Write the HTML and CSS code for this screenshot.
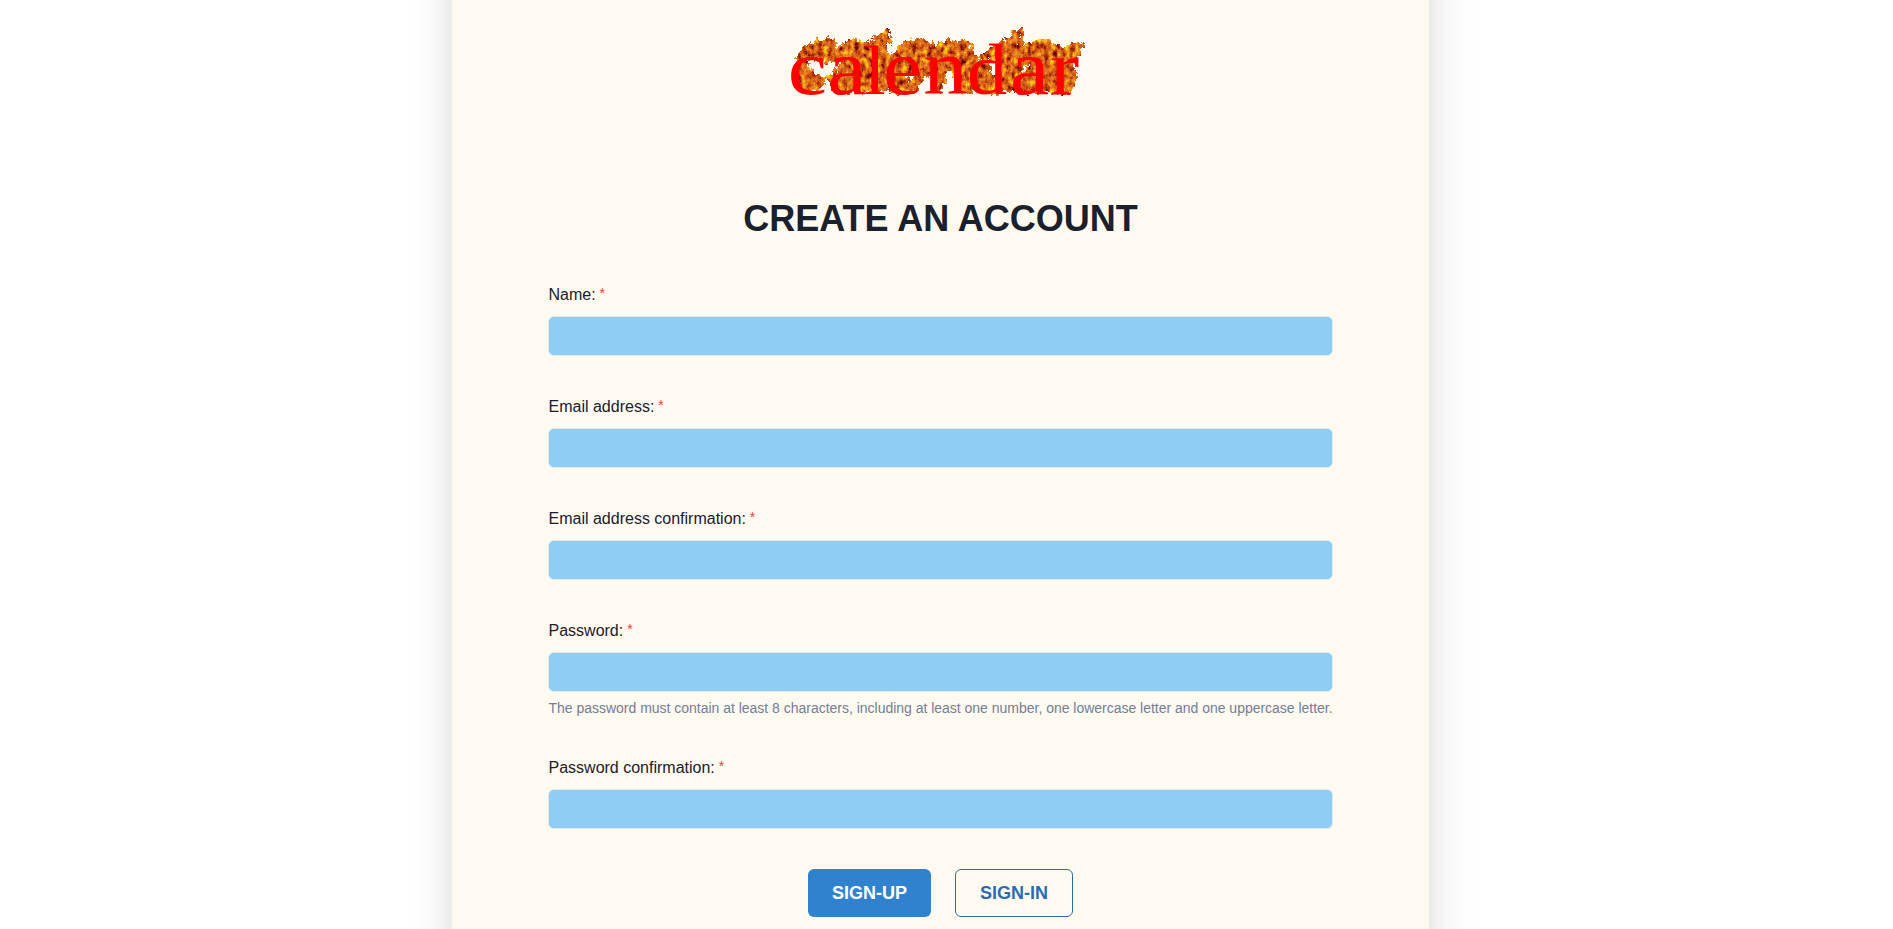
FILE: index.html
```html
<!DOCTYPE html>
<html lang="en">
<head>
<meta charset="utf-8">
<title>Create an account</title>
<link rel="stylesheet" href="styles.css">
</head>
<body>
<main class="card">
  <svg class="logo" viewBox="0 0 320 90" role="img" aria-label="calendar">
    <defs>
      <filter id="fire" x="0" y="0" width="320" height="90" filterUnits="userSpaceOnUse" color-interpolation-filters="sRGB">
        <feTurbulence type="fractalNoise" baseFrequency=".2 .16" numOctaves="4" seed="8" result="n"/>
        <feDisplacementMap in="SourceGraphic" in2="n" scale="11" xChannelSelector="R" yChannelSelector="G" result="shape"/>
        <feComponentTransfer in="shape" result="mask"><feFuncA type="discrete" tableValues="0 1"/></feComponentTransfer>
        <feTurbulence type="fractalNoise" baseFrequency=".19 .14" numOctaves="5" seed="3"/>
        <feColorMatrix values=".3 .3 .4 0 0  .3 .3 .4 0 0  .3 .3 .4 0 0  0 0 0 0 1"/>
        <feComponentTransfer result="colors">
          <feFuncR type="discrete" tableValues=".3 .3 .3 .3 .3 .36 .45 .58 .72 .82 .88 .93 .97 1 1 1 1 1 1 1"/>
          <feFuncG type="discrete" tableValues="0 0 0 0 0 0 .04 .13 .24 .35 .45 .55 .68 .8 .85 .9 .9 .9 .9 .9"/>
          <feFuncB type="discrete" tableValues="0 0 0 0 0 0 0 .02 .05 .09 .12 .12 .1 .06 .05 0 0 0 0 0"/>
        </feComponentTransfer>
        <feComposite in="colors" in2="mask" operator="in"/>
      </filter>
    </defs>
    <path filter="url(#fire)" fill-rule="evenodd" d="M12 61 14 43 19 36 27 28 32 25 42 25 50 22 57 26 55 33 66 26 75 23 84 27 94 23 104 13 110 13 110 24 107 34 111 41 118 31 128 25 140 23 151 28 153 33 159 27 171 25 183 25 190 31 193 38 199 43 207 35 218 28 229 21 233 14 242 13 240 30 252 27 262 23 275 28 283 34 287 29 305 27 300 38 293 48 296 60 292 72 288 79 238 79 226 75 216 79 196 77 188 79 177 76 172 55 165 59 165 68 158 78 153 76 150 60 144 61 137 75 125 79 111 78 102 76 94 79 84 77 70 79 52 76 47 64 39 75 27 79 18 73ZM27 45 36 44 44 50 52 46 60 47 52 57 43 61 31 57ZM207 45 219 45 221 59 210 59ZM122 61 134 58 128 66ZM240 55 250 47 243 58Z"/>
    <g transform="scale(1.12 1)">
      <text class="logo-text" x="6 41.5 74 91 127" y="79.5">ca<tspan class="tall">l</tspan>en</text>
      <text class="logo-text" x="166 204.5 240" y="79.5"><tspan class="bowl">d</tspan>ar</text>
    </g>
  </svg>
  <h1 class="title">CREATE AN ACCOUNT</h1>
  <form class="form">
    <div class="field"><label class="label" for="name">Name: <span class="required">*</span></label><input class="input" id="name"></div>
    <div class="field"><label class="label" for="email">Email address: <span class="required">*</span></label><input class="input" id="email"></div>
    <div class="field"><label class="label" for="email2">Email address confirmation: <span class="required">*</span></label><input class="input" id="email2"></div>
    <div class="field"><label class="label" for="pw">Password: <span class="required">*</span></label><input class="input" id="pw" type="password">
      <p class="hint">The password must contain at least 8 characters, including at least one number, one lowercase letter and one uppercase letter.</p></div>
    <div class="field"><label class="label" for="pw2">Password confirmation: <span class="required">*</span></label><input class="input" id="pw2" type="password"></div>
    <div class="actions">
      <button class="button primary" type="button">SIGN-UP</button>
      <button class="button outline" type="button">SIGN-IN</button>
    </div>
  </form>
</main>
</body>
</html>
```
FILE: styles.css
```css
* { box-sizing: border-box; }
body { margin: 0; height: 929px; padding-right: 12px; overflow: hidden; background: #fff; color: #1a202c; font: 16px/24px "Liberation Sans", Arial, sans-serif; }
.card { width: 977px; height: 1160px; margin: -100px auto 0; padding: 115px 96px 0; display: flex; flex-direction: column; align-items: center; background: #fffaf0; box-shadow: 0 25px 50px -12px rgba(0, 0, 0, .25); }
.logo { width: 320px; height: 90px; flex: none; }
.logo-text { font: 79px "Liberation Serif", serif; fill: #f00; }
.tall { font-size: 70px; }
.bowl { font-size: 72px; }
.title { margin: 93px 0 43px; font-size: 36px; line-height: 42px; font-weight: 700; }
.form { width: 785px; margin-top: 1px; display: flex; flex-direction: column; gap: 40px; }
.field { display: flex; flex-direction: column; }
.label { height: 24px; margin-bottom: 8px; padding-left: .5px; line-height: 22px; }
.required { display: inline-block; color: #e53e3e; font-size: 14px; line-height: 12px; vertical-align: 2px; margin-left: -.5px; }
.input { width: 100%; height: 40px; border: 1px solid #e2e8f0; border-radius: 6px; background: #90cdf4; outline: 0; }
.hint { margin: 8px 0 0; padding-left: .5px; font-size: 14px; line-height: 17px; letter-spacing: -.015px; color: #718096; white-space: nowrap; }
.actions { display: flex; justify-content: center; gap: 24px; }
.button { height: 48px; padding: 0 24px; border: 0; border-radius: 6px; font: 700 18px/22px "Liberation Sans", Arial, sans-serif; }
.primary { background: #3182ce; color: #fff; }
.outline { border: 1px solid #2b6cb0; background: transparent; color: #2b6cb0; }
```
